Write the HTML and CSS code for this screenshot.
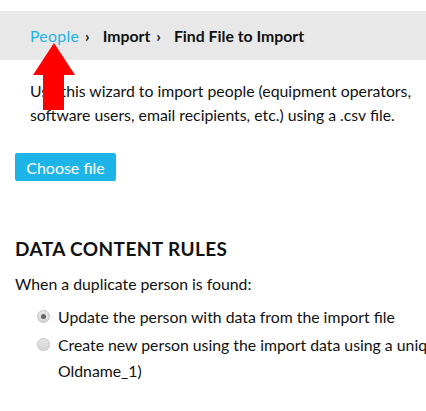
FILE: index.html
```html
<!DOCTYPE html>
<html>
<head>
<meta charset="utf-8">
<link rel="stylesheet" href="styles.css">
</head>
<body>
<div class="page">
  <nav class="crumbs">
    <a class="crumb-link" href="#">People</a><span class="sep">›</span>
    <span class="crumb">Import</span><span class="sep">›</span>
    <span class="crumb">Find File to Import</span>
    <svg class="arrow" width="42" height="67" viewBox="0 0 42 67"><polygon points="21,0 42,32 31,32 31,67 10,67 10,32 0,32" fill="#ff0000"/></svg>
  </nav>
  <p class="intro">Use this wizard to import people (equipment operators, software users, email recipients, etc.) using a .csv file.</p>
  <div class="actions"><button class="btn">Choose file</button></div>
  <h2 class="section-title">DATA CONTENT RULES</h2>
  <p class="lead">When a duplicate person is found:</p>
  <ul class="options">
    <li class="option"><span class="radio checked"></span><span class="option-text">Update the person with data from the import file</span></li>
    <li class="option"><span class="radio"></span><span class="option-text">Create new person using the import data using a unique name (e.g. Oldname_1)</span></li>
  </ul>
</div>
</body>
</html>
```
FILE: styles.css
```css
html, body { margin: 0; padding: 0; overflow: hidden; background: #fff; }
body { font-family: Lato, "Open Sans", sans-serif; color: #111; font-size: 15.8px; }
.page { width: 600px; padding-top: 11px; }
.crumbs { position: relative; background: #e8e8e8; height: 49px; display: flex; align-items: center; padding-left: 30px; font-weight: 700; font-size: 15.8px; }
.crumb-link { color: #1eb3e6; text-decoration: none; font-weight: 400; letter-spacing: 0.3px; }
.crumb { color: #111; }
.sep { margin: 0 13px 0 6px; font-weight: 700; }
.arrow { position: absolute; left: 33px; top: 32px; }
.intro { margin: 19px 0 0; padding-left: 30px; width: 392px; line-height: 24px; }
.actions { margin-top: 26px; padding-left: 15px; }
.btn { background: #1db5e8; color: #fff; border: none; border-radius: 2px; font-family: inherit; font-size: 16px; height: 28px; padding: 0 11px; width: 101px; }
.section-title { margin: 56px 0 0; padding-left: 15px; font-size: 19px; font-weight: 700; letter-spacing: 0.4px; line-height: 24px; }
.lead { margin: 11px 0 0; padding-left: 15px; line-height: 24px; }
.options { list-style: none; margin: 8px 0 0; padding: 0 0 0 37px; width: 520px; }
.option { display: flex; align-items: flex-start; line-height: 26px; margin-bottom: 2px; }
.radio { flex: none; width: 11px; height: 11px; border-radius: 50%; border: 1px solid #c4c4c4; background: linear-gradient(#e6e6e6, #d6d6d6); margin: 6px 8px 0 0; position: relative; }
.radio.checked::after { content: ""; position: absolute; left: 3px; top: 3px; width: 5px; height: 5px; border-radius: 50%; background: #666; }
.option-text { color: #111; }
```
